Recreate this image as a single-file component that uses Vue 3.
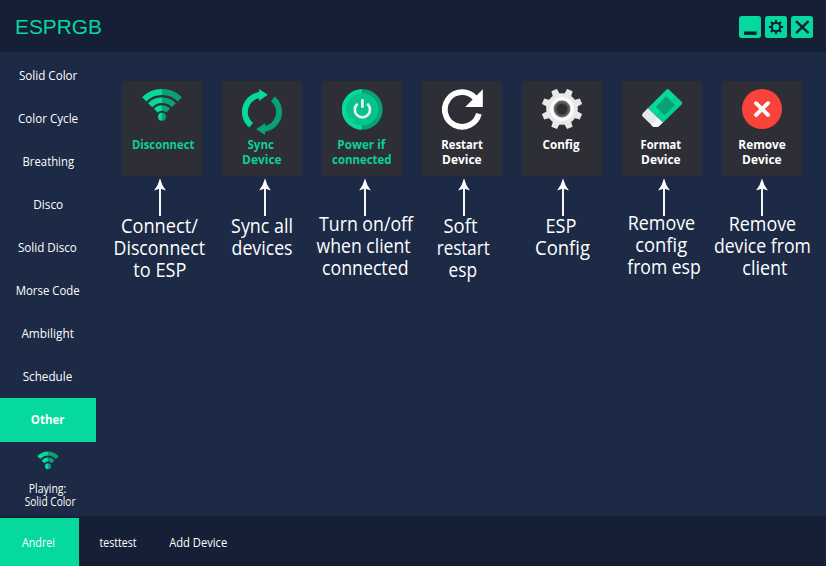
<script setup>
// Condenses a label horizontally to the given advance width.
const fit = (el, { value }) => {
  el.style.transform = 'none'
  const natural = el.getBoundingClientRect().width
  if (value && natural) el.style.transform = `scaleX(${value / natural})`
}
const vFit = { mounted: fit, updated: fit }

const modes = [
  { name: 'Solid Color', w: 58.5 },
  { name: 'Color Cycle', w: 60 },
  { name: 'Breathing', w: 51.5 },
  { name: 'Disco', w: 30 },
  { name: 'Solid Disco', w: 59 },
  { name: 'Morse Code', w: 64 },
  { name: 'Ambilight', w: 52.5 },
  { name: 'Schedule', w: 49.5 },
  { name: 'Other', w: 33.5, active: true },
]

// Each line is [text, width, horizontal shift from the column centre].
const actions = [
  { icon: 'wifi', green: true, label: [['Disconnect', 62.5, 1]], arrow: -2, drop: 0,
    note: [['Connect/', 77, -2.7], ['Disconnect', 91.5, -3], ['to ESP', 53, -2.7]] },
  { icon: 'sync', green: true, label: [['Sync', 26.5, -1], ['Device', 39.5, 0]], arrow: 3, drop: 0,
    note: [['Sync all', 62, 0.3], ['devices', 61, 0.5]] },
  { icon: 'power', green: true, label: [['Power if', 48, -0.3], ['connected', 59.5, -0.5]], arrow: 3, drop: -2,
    note: [['Turn on/off', 94, 4.3], ['when client', 94, 1.5], ['connected', 86.5, 3.7]] },
  { icon: 'restart', label: [['Restart', 41.5, 0], ['Device', 39.5, 0]], arrow: 2, drop: 0,
    note: [['Soft', 34, -1.5], ['restart', 53, 0.8], ['esp', 28.5, 0.7]] },
  { icon: 'config', label: [['Config', 37, -1]], arrow: 1, drop: 0,
    note: [['ESP', 31, -0.7], ['Config', 55, 0.5]] },
  { icon: 'format', label: [['Format', 40.5, -1], ['Device', 39.5, -1]], arrow: 2, drop: -3,
    note: [['Remove', 67.5, -0.3], ['config', 52, -0.4], ['from esp', 73.5, 2.2]] },
  { icon: 'remove', label: [['Remove', 47.5, 0], ['Device', 39.5, 0]], arrow: 0, drop: -2,
    note: [['Remove', 67.5, 0.7], ['device from', 97, 0.8], ['client', 45, 3.3]] },
]

const gearTeeth = [0, 45, 90, 135, 180, 225, 270, 315]
</script>

<template>
  <div class="window">
    <header class="titlebar">
      <h1 class="brand"><span v-fit="87" class="fit">ESPRGB</span></h1>
      <div class="controls">
        <button class="control" aria-label="Minimize">
          <svg viewBox="0 0 22 22"><rect x="5" y="15.5" width="12.7" height="3.4" fill="#151f35" /></svg>
        </button>
        <button class="control" aria-label="Settings">
          <svg viewBox="0 0 22 22" fill="#151f35">
            <rect v-for="a in gearTeeth" :key="a" x="9.9" y="3.9" width="2.2" height="3.4" :transform="`rotate(${a} 11 11)`" />
            <circle cx="11" cy="11" r="4.2" fill="none" stroke="#151f35" stroke-width="2" />
          </svg>
        </button>
        <button class="control" aria-label="Close">
          <svg viewBox="0 0 22 22"><path d="M5.8 5.8 16.8 16.4M16.8 5.8 5.8 16.4" stroke="#151f35" stroke-width="2.5" stroke-linecap="round" /></svg>
        </button>
      </div>
    </header>

    <div class="body">
      <nav class="sidebar">
        <a v-for="m in modes" :key="m.name" class="mode" :class="{ active: m.active }">
          <span v-fit="m.w" class="fit">{{ m.name }}</span>
        </a>
        <div class="status">
          <svg class="signal" viewBox="0 0 22 19" fill="none">
            <g stroke="#06d99d" stroke-width="4">
              <path d="M1.8 6.6A13 13 0 0 1 11 2.4" />
              <path d="M6 11A7.2 7.2 0 0 1 11 8.2" />
            </g>
            <g stroke="#07a275" stroke-width="4">
              <path d="M11 2.4A13 13 0 0 1 20.2 6.6" />
              <path d="M11 8.2A7.2 7.2 0 0 1 16 11" />
            </g>
            <path d="M11 12.2a3 3 0 0 0 0 6z" fill="#06d99d" />
            <path d="M11 12.2a3 3 0 0 1 0 6z" fill="#07a275" />
          </svg>
          <div class="playing">
            <div class="row"><span v-fit="37.5" class="fit">Playing:</span></div>
            <div class="row track"><span v-fit="51" class="fit">Solid Color</span></div>
          </div>
        </div>
      </nav>

      <main class="actions">
        <section v-for="a in actions" :key="a.icon" class="action">
          <button class="card" :class="{ green: a.green }">
            <svg v-if="a.icon === 'wifi'" class="icon" viewBox="0 0 42 47" fill="none">
              <g stroke="#06d99d">
                <path d="M2.3 10.3A24.7 24.7 0 0 1 20 3" stroke-width="6" />
                <path d="M8.2 16.2A16.6 16.6 0 0 1 20 11.2" stroke-width="5.8" />
                <path d="M13.8 21.6A8.8 8.8 0 0 1 20 19" stroke-width="5.4" />
              </g>
              <g stroke="#07a275">
                <path d="M20 3A24.7 24.7 0 0 1 37.7 10.3" stroke-width="6" />
                <path d="M20 11.2A16.6 16.6 0 0 1 31.8 16.2" stroke-width="5.8" />
                <path d="M20 19A8.8 8.8 0 0 1 26.2 21.6" stroke-width="5.4" />
              </g>
              <path d="M20 23.7a4 4 0 0 0 0 8z" fill="#06d99d" />
              <path d="M20 23.7a4 4 0 0 1 0 8z" fill="#07a275" />
            </svg>

            <svg v-else-if="a.icon === 'sync'" class="icon" viewBox="0 0 42 47">
              <path d="M9.2 36.2A17 17 0 0 1 18 6.1" fill="none" stroke="#06d99d" stroke-width="6" />
              <path d="M17 0 25.8 5.8 17 12z" fill="#06d99d" />
              <g transform="rotate(180 20 23)">
                <path d="M9.2 36.2A17 17 0 0 1 18 6.1" fill="none" stroke="#07a275" stroke-width="6" />
                <path d="M17 0 25.8 5.8 17 12z" fill="#07a275" />
              </g>
            </svg>

            <svg v-else-if="a.icon === 'power'" class="icon" viewBox="0 0 42 47">
              <path d="M20.2 0a20.4 20.4 0 0 0 0 40.8z" fill="#06d99d" />
              <path d="M20.2 0a20.4 20.4 0 0 1 0 40.8z" fill="#07a275" />
              <circle cx="20.2" cy="20.4" r="16.2" fill="#05c48b" />
              <path d="M15.6 14.8A7.6 7.6 0 1 0 25.2 14.8" fill="none" stroke="#ececec" stroke-width="2.7" />
              <path d="M20.4 10.2V18.7" stroke="#ececec" stroke-width="2.7" />
            </svg>

            <svg v-else-if="a.icon === 'restart'" class="icon" viewBox="0 0 42 47">
              <path d="M36.9 24.8A17.3 17.3 0 1 1 33 8.9" fill="none" stroke="#fff" stroke-width="5.8" />
              <path d="M40.8.2V17.9H23.2z" fill="#fff" />
            </svg>

            <svg v-else-if="a.icon === 'config'" class="icon" viewBox="0 0 42 47">
              <g fill="#e8e8e8">
                <path v-for="t in gearTeeth" :key="t" d="M16.2 7 17 -.5H23L23.8 7z" :transform="`rotate(${t + 22.5} 20 20)`" />
                <circle cx="20" cy="20" r="15.8" />
              </g>
              <circle cx="20" cy="20" r="10.2" fill="none" stroke="#fbfbfb" stroke-width="3.6" />
              <circle cx="20" cy="20" r="8.4" fill="#6a6a6a" />
              <circle cx="20" cy="20" r="6.9" fill="#4f4f50" />
              <circle cx="20" cy="20" r="5.3" fill="#2e2e36" />
            </svg>

            <svg v-else-if="a.icon === 'format'" class="icon" viewBox="0 0 42 47">
              <path d="M6 19 .6 24.4q-1 1.5 0 3L10.5 37.1 21 33.5z" fill="#e8e8e8" />
              <path d="M9 36 10.4 37.2q1 .9 2 .9H15q1 0 2-.9L21 33.5 15.8 29z" fill="#fafafa" />
              <path d="M6 19 24.3.7q1.4-1.2 2.8 0L39.4 12.8q1.3 1.2 0 2.6L21 33.5z" fill="#06d99d" />
              <path d="M33.5 7 39.4 12.8q1.3 1.2 0 2.6L21 33.5 13.8 26.5z" fill="#04cf94" />
              <path d="M23.9 7.3 33 16 22.6 26.6 13.8 17.8z" fill="#07a275" />
            </svg>

            <svg v-else class="icon" viewBox="0 0 42 47">
              <circle cx="20" cy="20" r="20" fill="#f9423a" />
              <path d="M14 14.2 26 26M26 14.2 14 26" stroke="#fafafa" stroke-width="3.9" stroke-linecap="round" />
            </svg>

            <span class="label">
              <span v-for="([text, w, dx], i) in a.label" :key="i" class="row" :style="{ translate: dx + 'px' }">
                <span v-fit="w" class="fit">{{ text }}</span>
              </span>
            </span>
          </button>

          <svg class="arrow" viewBox="0 0 14 40" :style="{ translate: a.arrow + 'px' }">
            <path d="M7 8V38" stroke="#fff" stroke-width="1.9" />
            <path d="M7 .2Q8.6 7 12.9 12.6L7 10.4 1.1 12.6Q5.4 7 7 .2z" fill="#fff" />
          </svg>

          <p class="note" :style="{ translate: `0 ${a.drop}px` }">
            <span v-for="([text, w, dx], i) in a.note" :key="i" class="row" :style="{ translate: dx + 'px' }">
              <span v-fit="w" class="fit">{{ text }}</span>
            </span>
          </p>
        </section>
      </main>
    </div>

    <footer class="devices">
      <a class="device active"><span v-fit="33" class="fit">Andrei</span></a>
      <a class="device test"><span v-fit="37" class="fit">testtest</span></a>
      <a class="device add"><span v-fit="58" class="fit">Add Device</span></a>
    </footer>
  </div>
</template>

<style>
body {
  margin: 0;
  background: #1c2a46;
}
</style>

<style scoped>
.window {
  width: 826px;
  height: 566px;
  display: flex;
  flex-direction: column;
  overflow: hidden;
  background: #1c2a46;
  color: #fff;
  font-family: "Open Sans", "Noto Sans", sans-serif;
  font-size: 12px;
}
button {
  border: 0;
  padding: 0;
  font: inherit;
  color: inherit;
}
.fit {
  display: inline-block;
  white-space: nowrap;
}
.row {
  display: flex;
  justify-content: center;
}
.titlebar {
  height: 52px;
  flex: none;
  box-sizing: border-box;
  padding: 0 13px 0 15px;
  display: flex;
  align-items: center;
  justify-content: space-between;
  background: #151f35;
}
.brand {
  margin: 0;
  padding-top: 1px;
  font: 400 21px/24px "Liberation Sans", Arial, sans-serif;
  color: #06d99d;
}
.brand .fit {
  transform-origin: left;
}
.controls {
  display: flex;
  gap: 4px;
  padding-top: 2px;
}
.control {
  width: 22px;
  height: 22px;
  border-radius: 2.5px;
  background: #06d99d;
}
.control svg {
  display: block;
}
.body {
  flex: 1;
  display: flex;
  min-height: 0;
}
.sidebar {
  width: 96px;
  flex: none;
  padding-top: 2px;
}
.mode {
  height: 43px;
  box-sizing: border-box;
  padding-right: 1px;
  display: flex;
  align-items: center;
  justify-content: center;
}
.mode:nth-child(-n + 4) {
  padding-right: 0;
}
.mode.active {
  height: 44px;
  padding-bottom: 1px;
  background: #06d99d;
  font-weight: 700;
}
.status {
  display: flex;
  flex-direction: column;
  align-items: center;
  padding-top: 9px;
}
.signal {
  width: 22px;
  height: 19px;
}
.playing {
  margin-top: 12px;
  padding-right: 2px;
  line-height: 13px;
}
.track {
  padding-left: 5px;
  margin-right: -2px;
}
.actions {
  display: grid;
  grid-template-columns: repeat(7, 100px);
  align-content: start;
  padding: 29px 0 0 16px;
}
.action {
  display: flex;
  flex-direction: column;
  align-items: center;
}
.card {
  width: 80px;
  height: 95px;
  display: flex;
  flex-direction: column;
  background: #2e2e36;
  font-weight: 700;
}
.card.green {
  color: #0bd097;
}
.icon {
  width: 42px;
  height: 47px;
  margin: 8px 0 0 20px;
}
.label {
  width: 80px;
  margin-top: 1px;
  line-height: 15px;
}
.arrow {
  width: 14px;
  height: 40px;
  margin-top: 2px;
}
.note {
  margin: -3px 0 0;
  font-size: 19.5px;
  line-height: 22px;
}
.devices {
  height: 50px;
  flex: none;
  box-sizing: border-box;
  padding-top: 2px;
  display: flex;
  background: #151f35;
}
.device {
  width: 79px;
  box-sizing: border-box;
  display: flex;
  align-items: center;
  justify-content: center;
  padding-right: 3px;
}
.device.active {
  background: #06d99d;
}
.device.test {
  padding-right: 1px;
}
.device.add {
  width: 84px;
  padding-right: 3px;
}
</style>
